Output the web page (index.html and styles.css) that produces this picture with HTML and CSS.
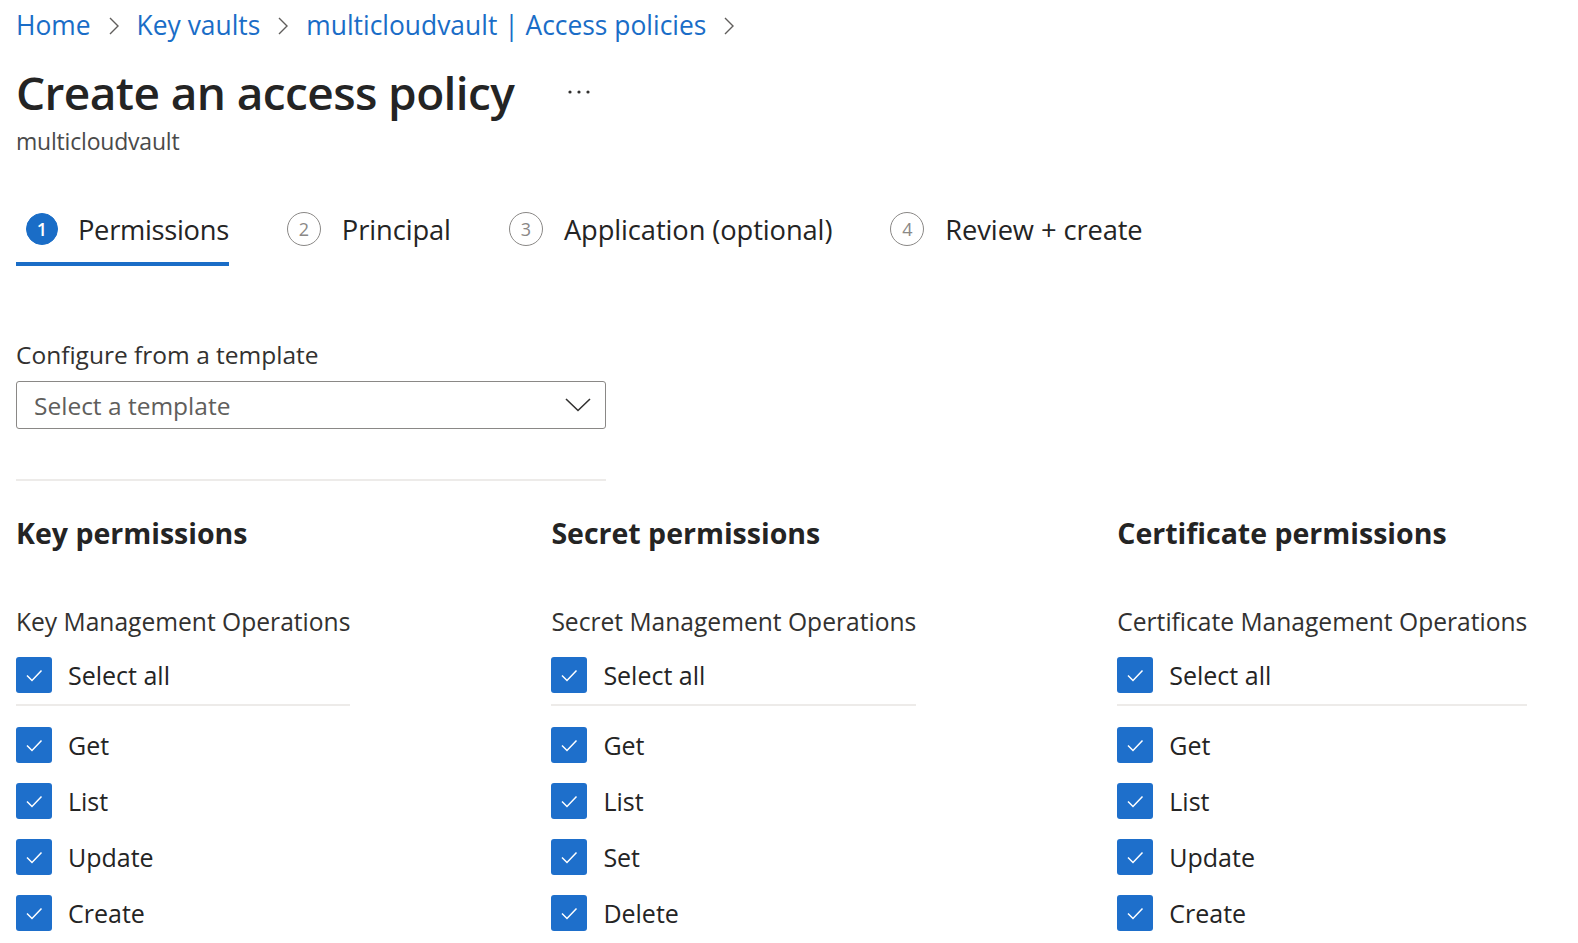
FILE: index.html
```html
<!DOCTYPE html>
<html lang="en">
<head>
<meta charset="utf-8">
<title>Create an access policy</title>
<link rel="stylesheet" href="styles.css">
</head>
<body>
<div class="page">
  <nav class="breadcrumb">
    <a class="crumb" href="#">Home</a>
    <svg class="sep" viewBox="0 0 12 20" width="12" height="20"><path d="M2 2 L10 10 L2 18" fill="none" stroke="#605e5c" stroke-width="1.4"/></svg>
    <a class="crumb" href="#">Key vaults</a>
    <svg class="sep" viewBox="0 0 12 20" width="12" height="20"><path d="M2 2 L10 10 L2 18" fill="none" stroke="#605e5c" stroke-width="1.4"/></svg>
    <a class="crumb" href="#">multicloudvault | Access policies</a>
    <svg class="sep" viewBox="0 0 12 20" width="12" height="20"><path d="M2 2 L10 10 L2 18" fill="none" stroke="#605e5c" stroke-width="1.4"/></svg>
  </nav>

  <header class="title-row">
    <h1 class="title">Create an access policy</h1>
    <span class="more">
      <svg viewBox="0 0 24 4" width="24" height="4"><circle cx="2" cy="2" r="1.6" fill="#323130"/><circle cx="11" cy="2" r="1.6" fill="#323130"/><circle cx="20" cy="2" r="1.6" fill="#323130"/></svg>
    </span>
  </header>
  <div class="subtitle">multicloudvault</div>

  <div class="tabs">
    <div class="tab active"><span class="step">1</span><span class="tab-label">Permissions</span></div>
    <div class="tab"><span class="step">2</span><span class="tab-label">Principal</span></div>
    <div class="tab"><span class="step">3</span><span class="tab-label">Application (optional)</span></div>
    <div class="tab"><span class="step">4</span><span class="tab-label">Review + create</span></div>
  </div>

  <div class="template">
    <label class="field-label">Configure from a template</label>
    <div class="dropdown">
      <span class="placeholder">Select a template</span>
      <svg class="chev" viewBox="0 0 26 14" width="26" height="14"><path d="M1 1 L13 12.5 L25 1" fill="none" stroke="#323130" stroke-width="1.6"/></svg>
    </div>
    <div class="divider"></div>
  </div>

  <div class="columns">
    <section class="col">
      <h2 class="col-title">Key permissions</h2>
      <div class="ops">Key Management Operations</div>
      <div class="check all"><span class="box"><svg viewBox="0 0 20 20" width="20" height="20"><path d="M3 10.5 L8 15.5 L17.5 5.5" fill="none" stroke="#fff" stroke-width="1.5"/></svg></span><span>Select all</span></div>
      <div class="list-rule"></div>
      <div class="check"><span class="box"><svg viewBox="0 0 20 20" width="20" height="20"><path d="M3 10.5 L8 15.5 L17.5 5.5" fill="none" stroke="#fff" stroke-width="1.5"/></svg></span><span>Get</span></div>
      <div class="check"><span class="box"><svg viewBox="0 0 20 20" width="20" height="20"><path d="M3 10.5 L8 15.5 L17.5 5.5" fill="none" stroke="#fff" stroke-width="1.5"/></svg></span><span>List</span></div>
      <div class="check"><span class="box"><svg viewBox="0 0 20 20" width="20" height="20"><path d="M3 10.5 L8 15.5 L17.5 5.5" fill="none" stroke="#fff" stroke-width="1.5"/></svg></span><span>Update</span></div>
      <div class="check"><span class="box"><svg viewBox="0 0 20 20" width="20" height="20"><path d="M3 10.5 L8 15.5 L17.5 5.5" fill="none" stroke="#fff" stroke-width="1.5"/></svg></span><span>Create</span></div>
    </section>
    <section class="col">
      <h2 class="col-title">Secret permissions</h2>
      <div class="ops">Secret Management Operations</div>
      <div class="check all"><span class="box"><svg viewBox="0 0 20 20" width="20" height="20"><path d="M3 10.5 L8 15.5 L17.5 5.5" fill="none" stroke="#fff" stroke-width="1.5"/></svg></span><span>Select all</span></div>
      <div class="list-rule"></div>
      <div class="check"><span class="box"><svg viewBox="0 0 20 20" width="20" height="20"><path d="M3 10.5 L8 15.5 L17.5 5.5" fill="none" stroke="#fff" stroke-width="1.5"/></svg></span><span>Get</span></div>
      <div class="check"><span class="box"><svg viewBox="0 0 20 20" width="20" height="20"><path d="M3 10.5 L8 15.5 L17.5 5.5" fill="none" stroke="#fff" stroke-width="1.5"/></svg></span><span>List</span></div>
      <div class="check"><span class="box"><svg viewBox="0 0 20 20" width="20" height="20"><path d="M3 10.5 L8 15.5 L17.5 5.5" fill="none" stroke="#fff" stroke-width="1.5"/></svg></span><span>Set</span></div>
      <div class="check"><span class="box"><svg viewBox="0 0 20 20" width="20" height="20"><path d="M3 10.5 L8 15.5 L17.5 5.5" fill="none" stroke="#fff" stroke-width="1.5"/></svg></span><span>Delete</span></div>
    </section>
    <section class="col">
      <h2 class="col-title">Certificate permissions</h2>
      <div class="ops">Certificate Management Operations</div>
      <div class="check all"><span class="box"><svg viewBox="0 0 20 20" width="20" height="20"><path d="M3 10.5 L8 15.5 L17.5 5.5" fill="none" stroke="#fff" stroke-width="1.5"/></svg></span><span>Select all</span></div>
      <div class="list-rule"></div>
      <div class="check"><span class="box"><svg viewBox="0 0 20 20" width="20" height="20"><path d="M3 10.5 L8 15.5 L17.5 5.5" fill="none" stroke="#fff" stroke-width="1.5"/></svg></span><span>Get</span></div>
      <div class="check"><span class="box"><svg viewBox="0 0 20 20" width="20" height="20"><path d="M3 10.5 L8 15.5 L17.5 5.5" fill="none" stroke="#fff" stroke-width="1.5"/></svg></span><span>List</span></div>
      <div class="check"><span class="box"><svg viewBox="0 0 20 20" width="20" height="20"><path d="M3 10.5 L8 15.5 L17.5 5.5" fill="none" stroke="#fff" stroke-width="1.5"/></svg></span><span>Update</span></div>
      <div class="check"><span class="box"><svg viewBox="0 0 20 20" width="20" height="20"><path d="M3 10.5 L8 15.5 L17.5 5.5" fill="none" stroke="#fff" stroke-width="1.5"/></svg></span><span>Create</span></div>
    </section>
  </div>
</div>
</body>
</html>
```

FILE: styles.css
```css
* { box-sizing: border-box; }
html, body { margin: 0; padding: 0; background: #fff; }
body {
  font-family: "Open Sans", "Noto Sans", "Liberation Sans", sans-serif;
  color: #323130;
  overflow: hidden;
}
.page { padding: 0 16px; }

.breadcrumb {
  display: flex;
  align-items: center;
  height: 50px;
}
.crumb {
  color: #1a6dc7;
  text-decoration: none;
  font-size: 26.4px;
  line-height: 50px;
}
.sep { margin: 2px 17px 0 17px; }

.title-row {
  display: flex;
  align-items: center;
  height: 84px;
}
.title {
  margin: 0;
  font-size: 46px;
  font-weight: 600;
  letter-spacing: -0.6px;
  color: #242424;
  line-height: 84px;
}
.more { margin-left: 54px; display: flex; }

.subtitle {
  margin-top: -3px;
  font-size: 23px;
  color: #4a4a4a;
  line-height: 20px;
  letter-spacing: -0.2px;
}

.tabs {
  display: flex;
  margin-top: 53px;
  gap: 48px;
}
.tab {
  display: flex;
  align-items: center;
  height: 62px;
  padding-left: 10px;
  padding-bottom: 8px;
  border-bottom: 4px solid transparent;
}
.tab.active { border-bottom-color: #1a6dc7; }
.step {
  width: 34px; height: 34px;
  border-radius: 50%;
  border: 1.5px solid #8a8886;
  color: #8a8886;
  font-size: 18px;
  display: flex; align-items: center; justify-content: center;
  margin-right: 21px;
  line-height: 1;
}
.tab.active .step {
  background: #1a6dc7; border-color: #1a6dc7; color: #fff;
  font-weight: 600; width: 32px; height: 32px; margin-right: 20px;
}
.tab-label {
  font-size: 27.3px;
  color: #242424;
  letter-spacing: -0.1px;
}
.tab.active .tab-label { font-weight: 500; letter-spacing: -0.3px; }

.template { margin-top: 72px; width: 590px; }
.field-label {
  display: block;
  font-size: 24.5px;
  line-height: 34px;
  color: #323130;
}
.dropdown {
  margin-top: 9px;
  height: 48px;
  border: 1.5px solid #8a8886;
  border-radius: 3px;
  display: flex;
  align-items: center;
  padding: 0 14px 0 17px;
}
.placeholder {
  flex: 1;
  font-size: 24.5px;
  color: #605e5c;
}
.chev { display: block; }
.divider { margin-top: 50px; height: 2px; background: #edebe9; }

.columns {
  display: flex;
  gap: 201px;
  margin-top: 28px;
}
.col { display: flex; flex-direction: column; }
.col-title {
  margin: 0;
  font-size: 28.5px;
  font-weight: 700;
  color: #242424;
  line-height: 48px;
}
.ops {
  margin-top: 48px;
  font-size: 24.6px;
  line-height: 34px;
  color: #323130;
  white-space: nowrap;
}
.check {
  display: flex;
  align-items: center;
  height: 56px;
  font-size: 25px;
  color: #242424;
}
.check.all { height: 42px; margin-top: 15px; }
.box {
  width: 36px; height: 36px;
  border-radius: 3px;
  background: #1e6fcb;
  display: flex; align-items: center; justify-content: center;
  margin-right: 16px;
  flex: none;
}
.list-rule { height: 2px; background: #edebe9; margin-top: 8px; margin-bottom: 11px; }
```
